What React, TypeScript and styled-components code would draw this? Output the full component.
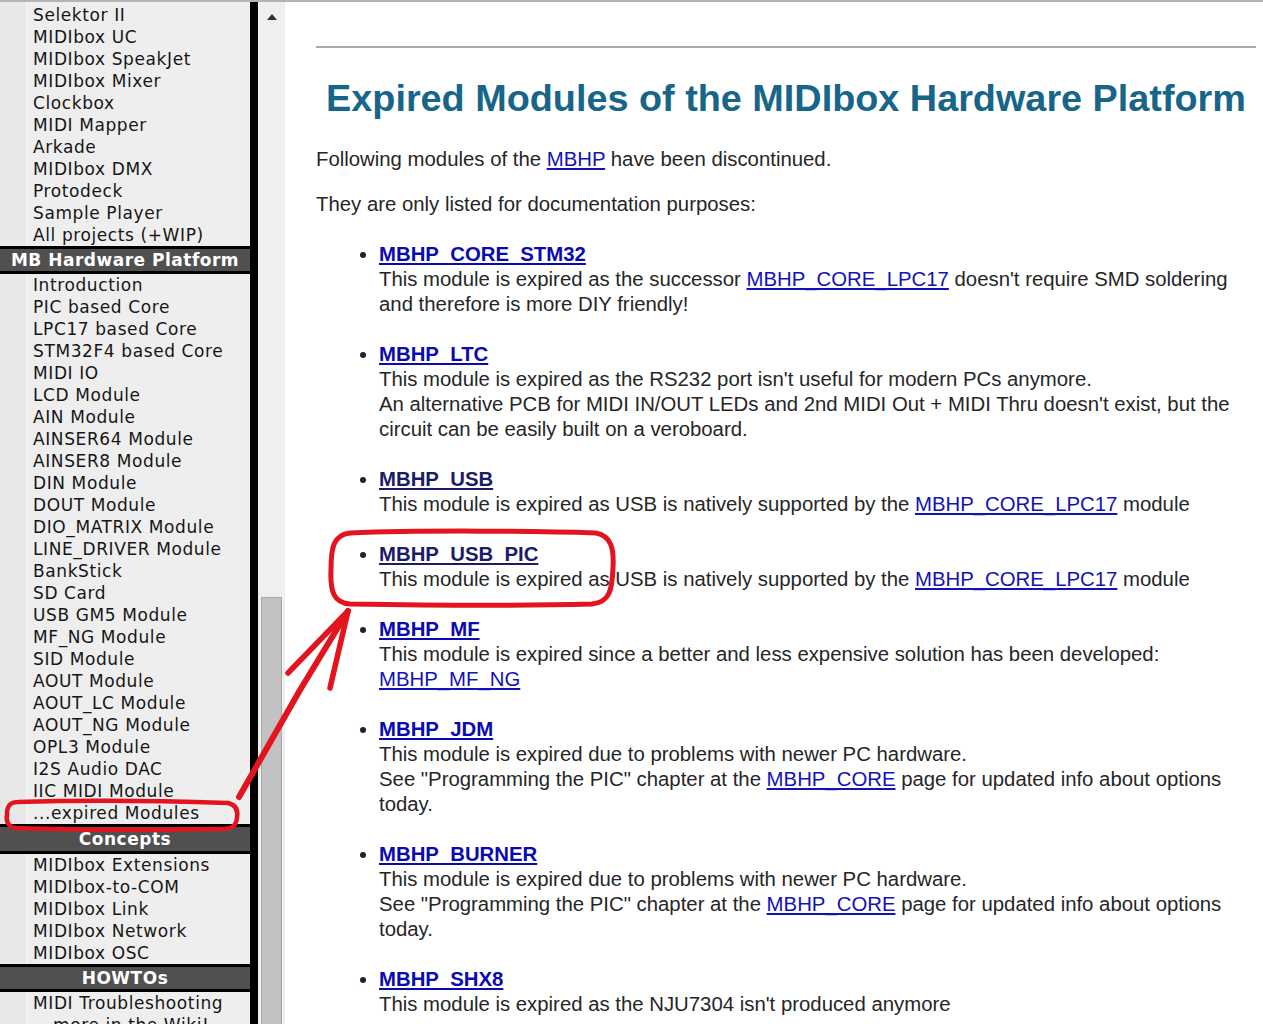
import React from "react";
import styled, { createGlobalStyle } from "styled-components";

const GlobalStyle = createGlobalStyle`
  body {
    margin: 0;
    background: #ffffff;
    overflow: hidden;
  }
`;

type Group = { title?: string; tall?: number; items: string[] };

const menu: Group[] = [
  {
    items: [
      "Selektor II",
      "MIDIbox UC",
      "MIDIbox SpeakJet",
      "MIDIbox Mixer",
      "Clockbox",
      "MIDI Mapper",
      "Arkade",
      "MIDIbox DMX",
      "Protodeck",
      "Sample Player",
      "All projects (+WIP)",
    ],
  },
  {
    title: "MB Hardware Platform",
    tall: 22,
    items: [
      "Introduction",
      "PIC based Core",
      "LPC17 based Core",
      "STM32F4 based Core",
      "MIDI IO",
      "LCD Module",
      "AIN Module",
      "AINSER64 Module",
      "AINSER8 Module",
      "DIN Module",
      "DOUT Module",
      "DIO_MATRIX Module",
      "LINE_DRIVER Module",
      "BankStick",
      "SD Card",
      "USB GM5 Module",
      "MF_NG Module",
      "SID Module",
      "AOUT Module",
      "AOUT_LC Module",
      "AOUT_NG Module",
      "OPL3 Module",
      "I2S Audio DAC",
      "IIC MIDI Module",
      "...expired Modules",
    ],
  },
  {
    title: "Concepts",
    tall: 24,
    items: [
      "MIDIbox Extensions",
      "MIDIbox-to-COM",
      "MIDIbox Link",
      "MIDIbox Network",
      "MIDIbox OSC",
    ],
  },
  {
    title: "HOWTOs",
    tall: 22,
    items: ["MIDI Troubleshooting"],
  },
];

const App = () => {
  return (
    <Page>
      <GlobalStyle />
      <Sidebar>
        {menu.map((group, gi) => (
          <React.Fragment key={gi}>
            {group.title && <GroupTitle tall={group.tall}>{group.title}</GroupTitle>}
            {group.items.map((item) => (
              <MenuRow key={item}>
                <MenuLink>{item}</MenuLink>
              </MenuRow>
            ))}
          </React.Fragment>
        ))}
        <MenuRow>
          <MenuLink center>...more in the Wiki!</MenuLink>
        </MenuRow>
      </Sidebar>
      <Divider />
      <Scrollbar>
        <ArrowUp />
        <Thumb />
      </Scrollbar>
      <Main>
        <Rule />
        <Title>Expired Modules of the MIDIbox Hardware Platform</Title>
        <Para>
          Following modules of the <Link>MBHP</Link> have been discontinued.
        </Para>
        <Para>They are only listed for documentation purposes:</Para>
        <ModuleList>
          <Module>
            <ModuleName>MBHP_CORE_STM32</ModuleName>
            <br />
            This module is expired as the successor <Link>MBHP_CORE_LPC17</Link>{" "}
            doesn't require SMD soldering
            <br />
            and therefore is more DIY friendly!
          </Module>
          <Module>
            <ModuleName>MBHP_LTC</ModuleName>
            <br />
            This module is expired as the RS232 port isn't useful for modern PCs anymore.
            <br />
            An alternative PCB for MIDI IN/OUT LEDs and 2nd MIDI Out + MIDI Thru doesn't
            exist, but the
            <br />
            circuit can be easily built on a veroboard.
          </Module>
          <Module>
            <ModuleName visited>MBHP_USB</ModuleName>
            <br />
            This module is expired as USB is natively supported by the{" "}
            <Link>MBHP_CORE_LPC17</Link> module
          </Module>
          <Module>
            <ModuleName visited>MBHP_USB_PIC</ModuleName>
            <br />
            This module is expired as USB is natively supported by the{" "}
            <Link>MBHP_CORE_LPC17</Link> module
          </Module>
          <Module>
            <ModuleName>MBHP_MF</ModuleName>
            <br />
            This module is expired since a better and less expensive solution has been
            developed:
            <br />
            <Link>MBHP_MF_NG</Link>
          </Module>
          <Module>
            <ModuleName>MBHP_JDM</ModuleName>
            <br />
            This module is expired due to problems with newer PC hardware.
            <br />
            See "Programming the PIC" chapter at the <Link>MBHP_CORE</Link> page for
            updated info about options
            <br />
            today.
          </Module>
          <Module>
            <ModuleName>MBHP_BURNER</ModuleName>
            <br />
            This module is expired due to problems with newer PC hardware.
            <br />
            See "Programming the PIC" chapter at the <Link>MBHP_CORE</Link> page for
            updated info about options
            <br />
            today.
          </Module>
          <Module>
            <ModuleName>MBHP_SHX8</ModuleName>
            <br />
            This module is expired as the NJU7304 isn't produced anymore
          </Module>
        </ModuleList>
      </Main>
      <Markup width="1263" height="1024" viewBox="0 0 1263 1024">
        <g fill="none" stroke="#e3141e" strokeLinecap="round" strokeLinejoin="round">
          <path
            strokeWidth="5"
            d="M350 533 C420 530 540 531 596 533 C612 536 614 550 613 568 C612 590 610 602 592 604 C520 606 410 605 350 604 C334 603 330 592 331 570 C331 548 333 535 350 533 Z"
          />
          <path
            strokeWidth="4.5"
            d="M18 802 C80 800 170 801 228 803 C237 805 238 812 237 818 C236 826 232 829 222 829 C160 830 70 830 16 828 C7 827 6 820 7 814 C7 806 10 802 18 802 Z"
          />
          <path strokeWidth="6" d="M239 797 L300 690 L348 611" />
          <path strokeWidth="5.5" d="M348 611 L288 673" />
          <path strokeWidth="5.5" d="M348 611 L330 688" />
        </g>
      </Markup>
    </Page>
  );
};

export default App;

const Page = styled.div`
  position: relative;
  display: flex;
  width: 1263px;
  height: 1024px;
  overflow: hidden;
  border-top: 2px solid #b4b4b4;
  box-sizing: border-box;
  background: #ffffff;
`;

const Sidebar = styled.div`
  width: 250px;
  flex-shrink: 0;
  padding-top: 2px;
  background: linear-gradient(to right, #e8e8e8 0, #e8e8e8 26px, #f6f6f6 26px, #f6f6f6 27px, #eeeeee 27px);
  font-family: "DejaVu Sans", Verdana, sans-serif;
`;

const MenuRow = styled.div`
  height: 22px;
  padding-left: 33px;
  display: flex;
  align-items: center;
`;

const MenuLink = styled.span<{ center?: boolean }>`
  font-size: 17px;
  letter-spacing: 0.6px;
  color: #161616;
  white-space: nowrap;
  ${(p) => (p.center ? "margin-left: 2px;" : "")}
`;

const GroupTitle = styled.div<{ tall?: number }>`
  height: ${(p) => p.tall ?? 22}px;
  border-top: 3px solid #000000;
  border-bottom: 3px solid #000000;
  background: #505050;
  color: #ffffff;
  font-weight: bold;
  font-size: 17px;
  letter-spacing: 0.5px;
  display: flex;
  align-items: center;
  justify-content: center;
  white-space: nowrap;
`;

const Divider = styled.div`
  width: 8px;
  flex-shrink: 0;
  background: #000000;
`;

const Scrollbar = styled.div`
  width: 27px;
  flex-shrink: 0;
  background: #efefef;
  display: flex;
  flex-direction: column;
  align-items: center;
  padding-top: 12px;
  box-sizing: border-box;
`;

const ArrowUp = styled.div`
  width: 0;
  height: 0;
  border-left: 5px solid transparent;
  border-right: 5px solid transparent;
  border-bottom: 6px solid #303030;
`;

const Thumb = styled.div`
  margin-top: 577px;
  width: 19px;
  flex: 1;
  background: #c2c2c2;
  border: 1px solid #a8a8a8;
  border-bottom: none;
`;

const Main = styled.div`
  flex: 1;
  padding: 44px 7px 0 31px;
  font-family: "Liberation Sans", Arial, sans-serif;
  font-size: 20.35px;
  line-height: 25px;
  color: #262626;
`;

const Rule = styled.div`
  height: 2px;
  background: #a9a9a9;
`;

const Title = styled.h1`
  margin: 28px 0 0;
  font-size: 37.8px;
  line-height: 44px;
  font-weight: bold;
  color: #17668a;
  text-align: center;
  white-space: nowrap;
`;

const Para = styled.p`
  margin: 27px 0 0;
  & + & {
    margin-top: 20px;
  }
`;

const ModuleList = styled.ul`
  margin: 25px 0 0;
  padding-left: 63px;
`;

const Module = styled.li`
  margin-bottom: 25px;
  white-space: nowrap;
  &::marker {
    color: #1e2233;
  }
`;

const ModuleName = styled.a<{ visited?: boolean }>`
  font-weight: bold;
  color: ${(p) => (p.visited ? "#1c1c66" : "#0a0ab4")};
  text-decoration: underline;
`;

const Link = styled.a`
  color: #1212b8;
  text-decoration: underline;
`;

const Markup = styled.svg`
  position: absolute;
  left: 0;
  top: -2px;
  pointer-events: none;
`;
